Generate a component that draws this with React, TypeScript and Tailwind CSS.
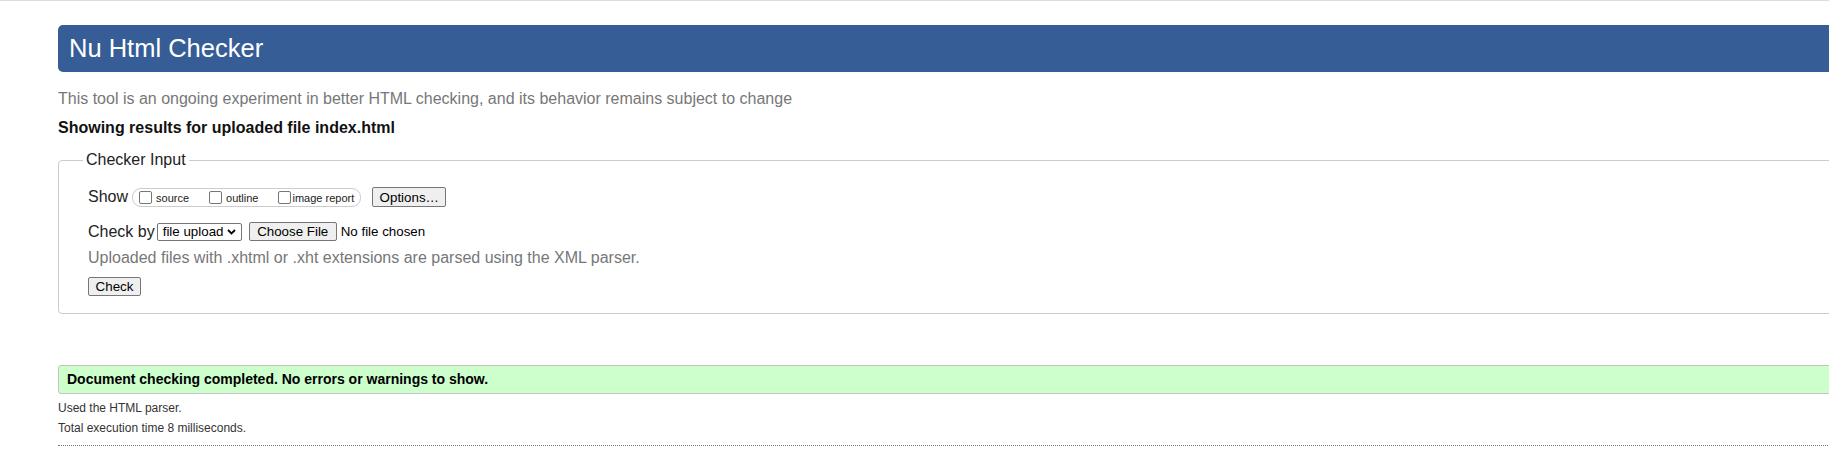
import React from "react";

const showOptions = [
  { id: "source", label: "source", gap: "ml-[4px]" },
  { id: "outline", label: "outline", gap: "ml-[4px]" },
  { id: "image", label: "image report", gap: "ml-[1px]" },
];

function NativeButton({ children, className = "" }: { children: React.ReactNode; className?: string }) {
  return (
    <button
      type="button"
      className={`h-[19px] border border-[#767676] rounded-[2px] bg-[#efefef] text-[13.33px] leading-[17px] text-black ${className}`}
    >
      {children}
    </button>
  );
}

export default function App() {
  return (
    <div className="w-full min-h-[467px] overflow-hidden bg-white border-t border-[#dcdcdc] font-['Liberation_Sans',Arial,sans-serif] text-[#222]">
      <div className="ml-[58px] w-[1900px] pt-[24px]">
        {/* Title bar */}
        <h1 className="h-[47px] py-[9px] pl-[11px] rounded-[5px] bg-[#365d95] text-white text-[25.5px] leading-[29px]">
          Nu Html Checker
        </h1>

        <p className="mt-[18px] text-[16px] leading-[18px] text-[#777]">
          This tool is an ongoing experiment in better HTML checking, and its behavior remains subject to change
        </p>
        <p className="mt-[11px] text-[16px] leading-[18px] font-bold text-[#111]">
          Showing results for uploaded file index.html
        </p>

        {/* Checker input form */}
        <fieldset className="mt-[14px] border border-[#cccccc] rounded-[4px] pl-[29px] pt-[18px] pb-[17px]">
          <legend className="-ml-[5px] px-[3px] text-[16px] leading-[18px]">Checker Input</legend>

          <div className="flex items-center h-[20px]">
            <span className="text-[16px] leading-[18px]">Show</span>
            <span className="ml-[4px] flex items-center h-[19px] pl-[6px] pr-[6px] border border-[#cccccc] rounded-[9px]">
              {showOptions.map((o, i) => (
                <label key={o.id} className={`flex items-center ${i > 0 ? "ml-[20px]" : ""}`}>
                  <input
                    type="checkbox"
                    className="appearance-none w-[13px] h-[13px] border border-[#767676] rounded-[2px] bg-white"
                  />
                  <span className={`${o.gap} text-[11px] leading-[13px] mt-[3px]`}>{o.label}</span>
                </label>
              ))}
            </span>
            <NativeButton className="ml-[11px] w-[74px] h-[20px]">Options…</NativeButton>
          </div>

          <div className="mt-[15px] flex items-center h-[19px]">
            <span className="text-[16px] leading-[18px]">Check by</span>
            <span className="ml-[2px] flex items-center justify-between w-[85px] h-[18px] pl-[5px] pr-[5px] border border-[#767676] rounded-[2px] bg-white text-[13.33px] leading-[16px] text-black">
              file upload
              <svg width="9" height="6" viewBox="0 0 9 6" className="mt-[1px]">
                <polyline points="1,1 4.5,4.5 8,1" fill="none" stroke="#000" strokeWidth="1.8" />
              </svg>
            </span>
            <NativeButton className="ml-[7px] w-[88px]">Choose File</NativeButton>
            <span className="ml-[4px] text-[13.33px] leading-[16px] text-black">No file chosen</span>
          </div>

          <p className="mt-[8px] text-[16px] leading-[18px] text-[#777]">
            Uploaded files with .xhtml or .xht extensions are parsed using the XML parser.
          </p>

          <NativeButton className="mt-[10px] w-[53px] block">Check</NativeButton>
        </fieldset>

        {/* Result summary */}
        <div className="mt-[51px] h-[29px] pl-[8px] border border-[#c4c4c4] rounded-[3px] bg-[#ccffcc] text-[14px] leading-[27px] font-bold text-black">
          Document checking completed. No errors or warnings to show.
        </div>

        <p className="mt-[4px] text-[12px] leading-[20px] text-[#333]">Used the HTML parser.</p>
        <p className="text-[12px] leading-[20px] text-[#333]">Total execution time 8 milliseconds.</p>
        <div className="mt-[7px] border-t border-dotted border-[#777]" />
      </div>
    </div>
  );
}
